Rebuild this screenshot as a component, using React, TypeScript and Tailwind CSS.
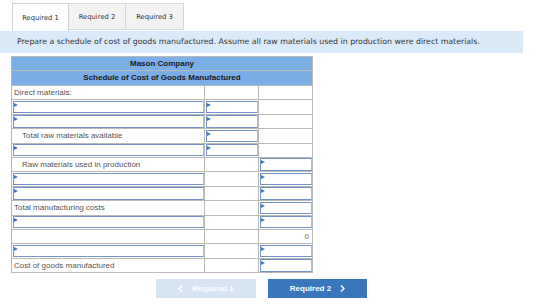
import React from "react";

type Row =
  | { kind: "label"; text: string; indent?: boolean; col2?: "input" | "blank"; col3?: "input" | "blank" | "zero" }
  | { kind: "input"; col2: "input" | "blank"; col3: "input" | "blank" };

const rows: Row[] = [
  { kind: "label", text: "Direct materials:", col2: "blank", col3: "blank" },
  { kind: "input", col2: "input", col3: "blank" },
  { kind: "input", col2: "input", col3: "blank" },
  { kind: "label", text: "Total raw materials available", indent: true, col2: "input", col3: "blank" },
  { kind: "input", col2: "input", col3: "blank" },
  { kind: "label", text: "Raw materials used in production", indent: true, col2: "blank", col3: "input" },
  { kind: "input", col2: "blank", col3: "input" },
  { kind: "input", col2: "blank", col3: "input" },
  { kind: "label", text: "Total manufacturing costs", col2: "blank", col3: "input" },
  { kind: "input", col2: "blank", col3: "input" },
  { kind: "label", text: "", col2: "blank", col3: "zero" },
  { kind: "input", col2: "blank", col3: "input" },
  { kind: "label", text: "Cost of goods manufactured", col2: "blank", col3: "input" },
];

function InputBox() {
  return (
    <div className="relative h-full w-full border border-[#7393c4] border-r-[#a9bfdf] bg-white">
      {/* little flag in the corner */}
      <span className="absolute left-0 top-[1px] h-0 w-0 border-y-[2px] border-l-[4px] border-y-transparent border-l-[#3f78c0]" />
    </div>
  );
}

function Cell({ type }: { type: "input" | "blank" | "zero" }) {
  return (
    <td className="h-[14.4px] border border-[#b9b9b9] p-0">
      {type === "input" ? (
        <div className="h-[13.4px] p-[0.5px]">
          <InputBox />
        </div>
      ) : type === "zero" ? (
        <div className="pr-[3px] text-right text-[8px] leading-[13px] text-[#666]">0</div>
      ) : null}
    </td>
  );
}

function Chevron({ dir }: { dir: "left" | "right" }) {
  return (
    <svg width="5" height="7" viewBox="0 0 5 7" fill="none" stroke="currentColor" strokeWidth="1.3">
      {dir === "left" ? <path d="M4 0.5L1 3.5L4 6.5" /> : <path d="M1 0.5L4 3.5L1 6.5" />}
    </svg>
  );
}

export default function App() {
  return (
    <div className="h-[305px] w-[560px] overflow-hidden bg-white" style={{ fontFamily: "'Liberation Sans', Arial, sans-serif" }}>
      {/* Tabs */}
      <div className="flex pl-[12px] pt-[3px]" style={{ fontFamily: "'DejaVu Sans', Verdana, sans-serif" }}>
        <div className="flex h-[28px] w-[57px] items-center justify-center border border-b-0 border-[#d0d0d0] bg-white pt-[1px] text-[6.8px] text-[#333]">
          Required 1
        </div>
        <div className="flex h-[27px] w-[57px] items-center justify-center border border-l-0 border-[#d7d7d7] bg-[#f3f3f3] pt-[1px] text-[6.8px] text-[#333]">
          Required 2
        </div>
        <div className="flex h-[27px] w-[58px] items-center justify-center border border-l-0 border-[#d7d7d7] bg-[#f3f3f3] pt-[1px] text-[6.8px] text-[#333]">
          Required 3
        </div>
      </div>

      {/* Instructions */}
      <div
        className="flex h-[22px] w-[523px] items-center bg-[#dbeaf8] pl-[17px] text-[7.8px] text-[#333]"
        style={{ fontFamily: "'DejaVu Sans', Verdana, sans-serif" }}
      >
        Prepare a schedule of cost of goods manufactured. Assume all raw materials used in production were direct materials.
      </div>

      {/* Schedule */}
      <div className="pl-[11px] pt-[3px]">
        <table className="w-[301px] table-fixed border-collapse text-[8px]">
          <colgroup>
            <col className="w-[193px]" />
            <col className="w-[54px]" />
            <col className="w-[54px]" />
          </colgroup>
          <thead>
            <tr>
              <th colSpan={3} className="h-[14px] border border-[#b9b9b9] bg-[#7baee6] p-0 text-center text-[8px] font-bold text-[#1a1a1a]">
                Mason Company
              </th>
            </tr>
            <tr>
              <th colSpan={3} className="h-[15px] border border-[#b9b9b9] bg-[#7baee6] p-0 text-center text-[8px] font-bold text-[#1a1a1a]">
                Schedule of Cost of Goods Manufactured
              </th>
            </tr>
          </thead>
          <tbody>
            {rows.map((r, i) => (
              <tr key={i}>
                {r.kind === "input" ? (
                  <Cell type="input" />
                ) : (
                  <td className="h-[14.4px] border border-[#b9b9b9] p-0">
                    <div className={`${r.indent ? "pl-[10px]" : "pl-[2px]"} whitespace-nowrap leading-[13px] text-[#555]`}>{r.text}</div>
                  </td>
                )}
                <Cell type={r.col2 ?? "blank"} />
                <Cell type={r.col3 ?? "blank"} />
              </tr>
            ))}
          </tbody>
        </table>
      </div>

      {/* Nav buttons */}
      <div className="flex gap-[12px] pl-[156px] pt-[6px]">
        <button className="flex h-[19px] w-[100px] items-center justify-center gap-[9px] bg-[#d6e4f3] text-[8px] font-bold text-white">
          <Chevron dir="left" />
          <span>Required 1</span>
        </button>
        <button className="flex h-[19px] w-[99px] items-center justify-center gap-[9px] bg-[#3a76bb] text-[8px] font-bold text-white">
          <span>Required 2</span>
          <Chevron dir="right" />
        </button>
      </div>
    </div>
  );
}
